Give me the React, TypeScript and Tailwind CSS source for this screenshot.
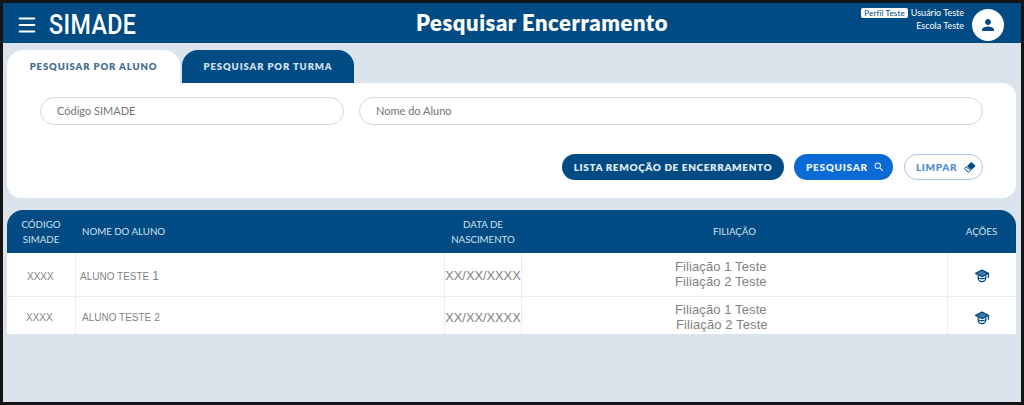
import { Menu } from "lucide-react";
import { MdPerson, MdSearch } from "react-icons/md";

const rows = [
  { id: "XXXX", name: "ALUNO TESTE", num: "1", idClass: "pl-[20px]", nameClass: "pl-[4px]", f1: "pl-[153px]", f2: "pl-[153px]" },
  { id: "XXXX", name: "ALUNO TESTE", num: "2", idClass: "pl-[19px]", nameClass: "pl-[6px]", f1: "pl-[153px]", f2: "pl-[154px]" },
];

function GradIcon() {
  return (
    <svg width="16" height="16" viewBox="0 0 16 16" fill="none" stroke="#004b84" strokeWidth="1.3" strokeLinejoin="round">
      <path d="M1.6 5.4 8 2.2l6.4 3.2L8 8.6z" fill="#3f7aa8" />
      <path d="M4.2 7.4v2.4c0 2.1 1.7 3.8 3.8 3.8s3.8-1.7 3.8-3.8V7.4" />
      <path d="M4.6 10c2.2 1 4.6 1 6.8 0" />
      <path d="M14.4 5.4v4.4" />
    </svg>
  );
}

function EraserIcon() {
  return (
    <svg width="13" height="11" viewBox="0 0 13 11" fill="#004b84">
      <path d="M7.6.6a1 1 0 0 1 1.4 0l3 2.7a1 1 0 0 1 0 1.4L8.3 8 4 4.2z" />
      <path d="M3.3 4.9 7.6 8.7 6.4 9.9a1 1 0 0 1-1.4 0L2 7.3a1 1 0 0 1 0-1.4z" fill="none" stroke="#004b84" strokeWidth="1" />
    </svg>
  );
}

function Field({ label, className }: { label: string; className: string }) {
  return (
    <div className={`h-[28px] rounded-full border border-[#d8d8d8] flex items-center pl-[16px] pt-px text-[11px] text-[#757575] ${className}`}>
      {label}
    </div>
  );
}

export default function App() {
  return (
    <div className="w-[1024px] h-[405px] border-[3px] border-[#141414] bg-[#dbe4ec] font-['Lato',sans-serif] overflow-hidden flex flex-col">
      {/* Header */}
      <header className="h-[40px] shrink-0 bg-[#004b84] flex items-center text-white">
        <Menu size={22} strokeWidth={2.2} className="ml-[13px] mt-[4px]" />
        <span className="ml-[11px] mt-[4px] w-[90px] text-[27px] leading-none font-medium font-['Roboto',sans-serif] tracking-[0.5px] scale-x-[0.86] origin-left">SIMADE</span>
        <h1 className="ml-[277px] text-[22px] font-extrabold tracking-[0.55px] whitespace-nowrap mb-[2px]">Pesquisar Encerramento</h1>
        <div className="ml-auto flex flex-col items-end text-[9px] leading-[13px] mr-[8px] mb-[8px]">
          <div className="flex items-center gap-[3px]">
            <span className="bg-white text-[#004b84] rounded-[2px] px-[3px] leading-[10px] text-[8px] tracking-[0.15px]">Perfil Teste</span>
            <span>Usuário Teste</span>
          </div>
          <span>Escola Teste</span>
        </div>
        <div className="w-[32px] h-[32px] mt-[3px] rounded-full bg-white mr-[17px] flex items-center justify-center">
          <MdPerson size={18} className="text-[#004b84]" />
        </div>
      </header>

      {/* Tabs */}
      <div className="flex ml-[4px] mt-[7px] gap-[2px] h-[33px] shrink-0 text-[9.5px] font-extrabold tracking-[0.9px]">
        <div className="w-[173px] rounded-t-[16px] bg-white text-[#3f6d94] flex items-center justify-center pt-[2px]">PESQUISAR POR ALUNO</div>
        <div className="w-[172px] rounded-t-[16px] bg-[#004b84] text-[#d5e1ec] flex items-center justify-center pt-[2px]">PESQUISAR POR TURMA</div>
      </div>

      {/* Filtros */}
      <section className="mx-[4px] w-[1009px] h-[115px] shrink-0 bg-white rounded-b-[14px] rounded-tr-[14px] pt-[14px] pl-[33px]">
        <div className="flex gap-[15px]">
          <Field label="Código SIMADE" className="w-[304px]" />
          <Field label="Nome do Aluno" className="w-[624px]" />
        </div>
        <div className="flex mt-[29px] ml-[522px] gap-[10px] text-[10px] font-extrabold tracking-[0.6px]">
          <button className="w-[222px] h-[26px] rounded-full bg-[#004b84] text-[#e3ecf4]">LISTA REMOÇÃO DE ENCERRAMENTO</button>
          <button className="w-[99px] h-[26px] rounded-full bg-[#0a6bd6] text-[#e6f0fb] flex items-center pl-[12px] gap-[5px] tracking-[0.7px]">
            PESQUISAR <MdSearch size={12} />
          </button>
          <button className="w-[79px] h-[26px] ml-px rounded-full bg-white border border-[#a9c8ea] text-[#5b8fcb] flex items-center pl-[11px] gap-[6px] tracking-[0.6px]">
            LIMPAR <EraserIcon />
          </button>
        </div>
      </section>

      {/* Tabela */}
      <section className="mx-[4px] w-[1009px] mt-[12px]">
        <div className="grid grid-cols-[68px_369px_78px_425px_69px] h-[43px] bg-[#004b84] rounded-t-[16px] text-[9.7px] leading-[15px] text-[#d5e1ec] items-center">
          <div className="text-center">CÓDIGO<br />SIMADE</div>
          <div className="pl-[7px]">NOME DO ALUNO</div>
          <div className="text-center">DATA DE<br />NASCIMENTO</div>
          <div className="text-center">FILIAÇÃO</div>
          <div className="text-center">AÇÕES</div>
        </div>
        {rows.map((r, i) => (
          <div
            key={i}
            className={`grid grid-cols-[68px_369px_78px_425px_69px] bg-white text-[#828282] font-['Liberation_Sans',sans-serif] ${i === 0 ? "h-[44px] border-b border-[#ececec]" : "h-[37px]"}`}
          >
            <div className={`flex items-center text-[10px] ${i === 0 ? "pt-[3px]" : "pt-[4px]"} ${r.idClass}`}>{r.id}</div>
            <div className={`flex items-center gap-[3px] text-[10px] border-l border-[#ececec] ${i === 0 ? "pt-[3px]" : "pt-[4px]"} ${r.nameClass}`}>
              {r.name} <span className={i === 0 ? "text-[12px]" : "text-[10px]"}>{r.num}</span>
            </div>
            <div className={`flex items-center justify-center text-[12.8px] border-l border-r border-[#ececec] whitespace-nowrap ${i === 0 ? "pt-[3px]" : "pt-[4px]"}`}>XX/XX/XXXX</div>
            <div className={`flex flex-col justify-center text-[13px] tracking-[0.1px] leading-[15.5px] ${i === 0 ? "pb-[1px]" : "pt-[3px]"}`}>
              <span className={r.f1}>Filiação 1 Teste</span>
              <span className={r.f2}>Filiação 2 Teste</span>
            </div>
            <div className={`flex items-center justify-center border-l border-[#ececec] ${i === 0 ? "pt-[2px]" : "pt-[5px]"}`}>
              <GradIcon />
            </div>
          </div>
        ))}
      </section>
    </div>
  );
}
